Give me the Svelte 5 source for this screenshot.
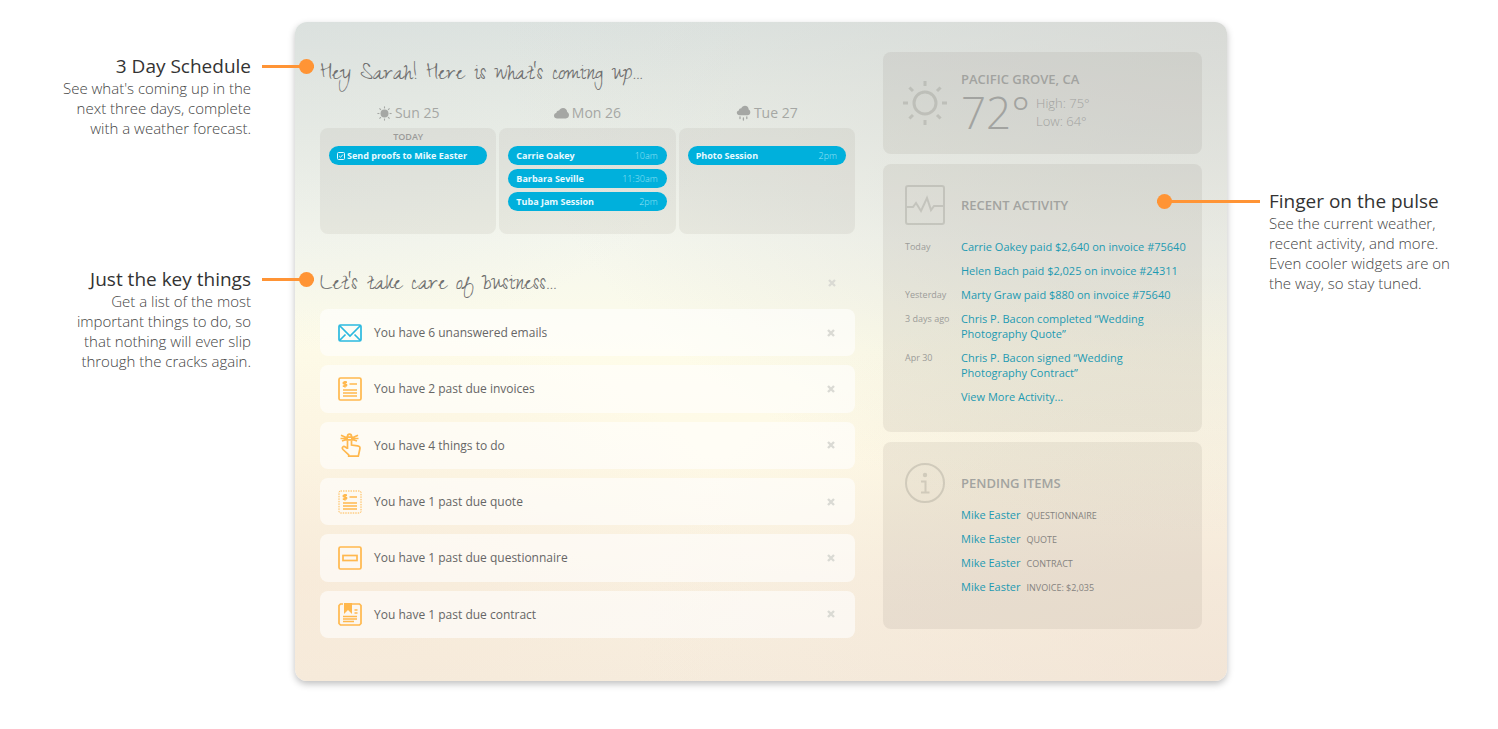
<script>
  const days = [
    {
      name: "Sun 25",
      weather: "sun",
      today: true,
      events: [{ title: "Send proofs to Mike Easter", task: true }]
    },
    {
      name: "Mon 26",
      weather: "cloud",
      events: [
        { title: "Carrie Oakey", time: "10am" },
        { title: "Barbara Seville", time: "11:30am" },
        { title: "Tuba Jam Session", time: "2pm" }
      ]
    },
    {
      name: "Tue 27",
      weather: "rain",
      events: [{ title: "Photo Session", time: "2pm" }]
    }
  ];

  let showList = true;
  let todos = [
    { icon: "mail", text: "You have 6 unanswered emails" },
    { icon: "invoice", text: "You have 2 past due invoices" },
    { icon: "hand", text: "You have 4 things to do" },
    { icon: "quote", text: "You have 1 past due quote" },
    { icon: "form", text: "You have 1 past due questionnaire" },
    { icon: "contract", text: "You have 1 past due contract" }
  ];

  const activity = [
    { when: "Today", text: "Carrie Oakey paid $2,640 on invoice #75640" },
    { when: "", text: "Helen Bach paid $2,025 on invoice #24311" },
    { when: "Yesterday", text: "Marty Graw paid $880 on invoice #75640" },
    { when: "3 days ago", text: "Chris P. Bacon completed “Wedding Photography Quote”" },
    { when: "Apr 30", text: "Chris P. Bacon signed “Wedding Photography Contract”" },
    { when: "", text: "View More Activity..." }
  ];

  const pending = [
    { who: "Mike Easter", what: "Questionnaire" },
    { who: "Mike Easter", what: "Quote" },
    { who: "Mike Easter", what: "Contract" },
    { who: "Mike Easter", what: "Invoice: $2,035" }
  ];

  const rays = [0, 45, 90, 135, 180, 225, 270, 315];

  const dismiss = todo => {
    todos = todos.filter(val => val !== todo);
  };
</script>

<div class="page">
  <div class="notes left">
    <section class="note">
      <h3>3 Day Schedule<span class="pin"></span></h3>
      <p>See what's coming up in the next three days, complete with a weather forecast.</p>
    </section>
    <section class="note">
      <h3>Just the key things<span class="pin"></span></h3>
      <p>Get a list of the most important things to do, so that nothing will ever slip through the cracks again.</p>
    </section>
  </div>

  <main class="board">
    <div class="primary">
      <h1 class="script">Hey Sarah! Here is what's coming up...</h1>

      <div class="days">
        {#each days as day}
          <section class="day">
            <h2>
              {#if day.weather === "sun"}
                <svg width="15" height="15" viewBox="0 0 15 15">
                  <circle cx="7.5" cy="7.5" r="4" fill="currentColor" />
                  {#each rays as r}
                    <path d="M7.5 0.4v2" transform="rotate({r} 7.5 7.5)" stroke="currentColor" stroke-width="1.1" />
                  {/each}
                </svg>
              {:else}
                <svg width="15" height="16" viewBox="0 0 15 16">
                  <path
                    transform={day.weather === "rain" ? "translate(.8 0) scale(.9)" : "translate(0 2)"}
                    d="M3.2 11.4C1.4 11.4 0 10.4 0 8.7c0-1.5 1-2.5 2.3-2.7C2.4 4.3 3.7 3.4 5.1 3.5 5.8 1.9 7.3.9 9 .9c2.5 0 4.2 1.9 4.2 4.2 1.1.6 1.8 1.6 1.8 3 0 2-1.3 3.3-3.2 3.3z"
                    fill="currentColor"
                  />
                  {#if day.weather === "rain"}
                    <path d="M4 11.8v1.8M10.8 11.8v1.8M7.4 13v2" stroke="currentColor" stroke-width="1.3" stroke-linecap="round" />
                  {/if}
                </svg>
              {/if}
              {day.name}
            </h2>
            <div class="slot">
              <div class="today">{day.today ? "TODAY" : ""}</div>
              {#each day.events as event}
                <a class="event" href="#event">
                  {#if event.task}
                    <svg width="8" height="8" viewBox="0 0 8 8" fill="none" stroke="currentColor">
                      <rect x=".5" y=".5" width="7" height="7" rx="1" />
                      <path d="M2.2 4l1.3 1.3 2.4-2.7" />
                    </svg>
                  {/if}
                  <b>{event.title}</b>
                  {#if event.time}<time>{event.time}</time>{/if}
                </a>
              {/each}
            </div>
          </section>
        {/each}
      </div>

      {#if showList}
        <div class="list-head">
          <h1 class="script">Let's take care of business...</h1>
          <button class="close" aria-label="Close list" on:click={() => (showList = false)}>
            <svg width="8" height="8" viewBox="0 0 8 8"><path d="M1 1l6 6M7 1l-6 6" /></svg>
          </button>
        </div>

        <ul class="todos">
          {#each todos as todo}
            <li>
              <svg class="icon" class:blue={todo.icon === "mail"} width="24" height="24" viewBox="0 0 24 24">
                {#if todo.icon === "mail"}
                  <rect x="1" y="4" width="22" height="16" rx="1.5" />
                  <path d="M1.5 4.5L12 15 22.5 4.5M1.5 19.5l6-6M22.5 19.5l-6-6" />
                {:else if todo.icon === "form"}
                  <rect x="1" y="1" width="22" height="22" rx="1.5" />
                  <rect x="5" y="9.5" width="14" height="5" />
                {:else if todo.icon === "hand"}
                  <path d="M9.5 16V7.5M13.5 7.5V12l6 .8c2 .3 2.7 1.3 2.4 3l-1.6 7.4h-9.6v-1.4L5 16.5c-1.7-1.9.4-3.9 2.3-2.5l2.2 1.5" />
                  <path d="M9.5 3.5c0-3.3 4-3.3 4 0M9.2 4.2h4.6v2.6H9.2zM9.2 5L3 2.2M9.2 5.5H2.5M9.2 6.2L4 8M13.8 5L20 2.2M13.8 5.5h6.7M13.8 6.2L19 8" />
                {:else if todo.icon === "contract"}
                  <path d="M5 2H2.5L1 3.5V21.5L2.5 23h19l1.5-1.5v-18L21.5 2H14" />
                  <path class="solid" d="M6 1h8v11l-4-4-4 4z" />
                  <path d="M16.5 8h3M16.5 11h3M5 14.5h14M5 17h14M5 19.5h11" />
                {:else}
                  <rect
                    x="1" y="1" width="22" height="22" rx="1.5"
                    class:dashed={todo.icon === "quote"}
                  />
                  <path d="M11.5 7H19M5 13h14M5 16h14M5 19h14" />
                  <path d="M9 5.2H6.8C4.7 5.2 4.7 7 6.8 7c2.5 0 2.5 2.2 0 2.2H4.8M7 4v6.5" />
                {/if}
              </svg>
              <a href="#todo">{todo.text}</a>
              <button class="close" aria-label="Dismiss" on:click={() => dismiss(todo)}>
                <svg width="8" height="8" viewBox="0 0 8 8"><path d="M1 1l6 6M7 1l-6 6" /></svg>
              </button>
            </li>
          {/each}
        </ul>
      {/if}
    </div>

    <aside>
      <section class="card weather">
        <svg class="badge" width="46" height="46" viewBox="0 0 46 46">
          <circle cx="23" cy="23" r="11" />
          {#each rays as r}
            <path d="M23 1v5" transform="rotate({r} 23 23)" />
          {/each}
        </svg>
        <div>
          <h2>PACIFIC GROVE, CA</h2>
          <div class="temps">
            <span class="now">72°</span>
            <span class="range">High: 75°<br />Low: 64°</span>
          </div>
        </div>
      </section>

      <section class="card recent">
        <header>
          <svg class="badge" width="40" height="40" viewBox="0 0 40 40">
            <rect x="1" y="1" width="38" height="38" rx="2" />
            <path d="M2 22h6l3-4 5 8 6-13 4 12 3-4h9" />
          </svg>
          <h2>RECENT ACTIVITY</h2>
        </header>
        <ul>
          {#each activity as item}
            <li>
              <span class="when">{item.when}</span>
              <a href="#activity">{item.text}</a>
            </li>
          {/each}
        </ul>
      </section>

      <section class="card pending">
        <header>
          <svg class="badge" width="40" height="40" viewBox="0 0 40 40">
            <circle cx="20" cy="20" r="19" />
            <circle class="solid" cx="20" cy="12" r="2.2" />
            <path d="M16 18.5h4.5V29M16 29.5h8.5" />
          </svg>
          <h2>PENDING ITEMS</h2>
        </header>
        <ul>
          {#each pending as item}
            <li>
              <a href="#pending">{item.who}</a>
              <span class="what">{item.what}</span>
            </li>
          {/each}
        </ul>
      </section>
    </aside>
  </main>

  <div class="notes right">
    <section class="note">
      <h3>Finger on the pulse<span class="pin"></span></h3>
      <p>See the current weather, recent activity, and more. Even cooler widgets are on the way, so stay tuned.</p>
    </section>
  </div>
</div>

<style>
  :global(body) {
    background: #fff;
    font-family: "Open Sans", "Noto Sans", sans-serif;
  }

  * {
    margin: 0;
    padding: 0;
    box-sizing: border-box;
  }

  a {
    text-decoration: none;
  }

  ul {
    list-style: none;
  }

  svg {
    flex: none;
  }

  .page {
    display: grid;
    grid-template-columns: minmax(0, 295fr) minmax(0, 932fr) minmax(0, 271fr);
    align-items: start;
    padding: 22px 0 48px;
  }

  /* notes beside the board */
  .notes {
    position: relative;
    z-index: 1;
    display: grid;
    color: #444;
  }

  .left {
    justify-items: end;
    gap: 129px;
    padding: 32px 44px 0 0;
    text-align: right;
  }

  .right {
    padding: 167px 0 0 42px;
  }

  .note {
    max-width: 190px;
  }

  .note h3 {
    position: relative;
    font-size: 19px;
    font-weight: 400;
    line-height: 24px;
    color: #333;
    white-space: nowrap;
  }

  .note p {
    font-size: 15px;
    font-weight: 300;
    line-height: 20px;
  }

  .pin {
    position: absolute;
    top: 11px;
    left: calc(100% + 11px);
    width: 52px;
    height: 3px;
    background: #ff9435;
  }

  .pin::after {
    content: "";
    position: absolute;
    top: -6px;
    right: 0;
    width: 15px;
    height: 15px;
    border-radius: 50%;
    background: #ff9435;
  }

  .right .pin {
    left: auto;
    right: calc(100% + 9px);
    width: 103px;
  }

  .right .pin::after {
    right: auto;
    left: 0;
  }

  .board {
    display: grid;
    grid-template-columns: minmax(0, 535fr) minmax(0, 319fr);
    gap: 28px;
    padding: 30px 25px 43px;
    border-radius: 12px;
    box-shadow: 0 3px 7px rgba(0, 0, 0, 0.25);
    background:
      radial-gradient(ellipse at 100% 0, rgba(214, 214, 210, 0.7), rgba(214, 214, 210, 0) 55%),
      radial-gradient(ellipse at 100% 100%, rgba(238, 222, 208, 0.5), rgba(238, 222, 208, 0) 45%),
      radial-gradient(ellipse at 0 0, rgba(216, 220, 218, 0.4), rgba(216, 220, 218, 0) 35%),
      radial-gradient(ellipse at 0 85%, rgba(246, 230, 212, 0.5), rgba(246, 230, 212, 0) 35%),
      linear-gradient(#dde4e1, #e6ebe5 10%, #f5f7ee 33%, #fefce9 50%, #fef9e6 66%, #f9f0e0 84%, #f6ecdd);
  }

  .script {
    padding-top: 6px;
    font-family: "Zeyada", "Reenie Beanie", "Liberation Serif", cursive;
    font-size: 25px;
    font-weight: 400;
    line-height: 36px;
    color: #707070;
    white-space: nowrap;
  }

  /* three day schedule */
  .days {
    display: grid;
    grid-template-columns: repeat(3, 1fr);
    gap: 3px;
    margin-top: 8px;
  }

  .day h2 {
    display: flex;
    align-items: center;
    justify-content: center;
    gap: 3px;
    font-size: 14px;
    font-weight: 400;
    line-height: 22px;
    color: #a5a7a4;
  }

  .slot {
    display: flex;
    flex-direction: column;
    gap: 4px;
    min-height: 106px;
    margin-top: 4px;
    padding: 4px 9px 20px;
    border-radius: 8px;
    background: rgba(120, 115, 105, 0.09);
  }

  .today {
    height: 10px;
    font-size: 9px;
    font-weight: 600;
    line-height: 10px;
    text-align: center;
    color: #9b9b99;
  }

  .event {
    display: flex;
    align-items: center;
    gap: 2px;
    height: 19px;
    padding: 0 9px 0 8px;
    border-radius: 10px;
    background: #00b0dc;
    font-size: 9px;
    color: #e9faff;
  }

  .event time {
    margin-left: auto;
    font-weight: 300;
    color: #9be3f5;
  }

  /* things to take care of */
  .list-head {
    display: flex;
    align-items: center;
    justify-content: space-between;
    margin-top: 28px;
    padding-right: 19px;
  }

  .close {
    display: grid;
    border: 0;
    background: none;
    cursor: pointer;
  }

  .close path {
    fill: none;
    stroke: #dadad4;
    stroke-width: 2.4;
  }

  .todos {
    display: grid;
    grid-auto-rows: 1fr;
    gap: 9px;
    min-height: 329px;
    margin-top: 5px;
  }

  .todos li {
    display: flex;
    align-items: center;
    gap: 12px;
    padding: 0 20px 0 18px;
    border-radius: 8px;
    background: rgba(255, 255, 255, 0.6);
  }

  .todos a {
    flex: 1;
    font-size: 12px;
    color: #666;
  }

  .icon {
    fill: none;
    stroke: #ffb84d;
    stroke-width: 1.7;
  }

  .icon.blue {
    stroke: #2bb9df;
  }

  .icon .solid {
    fill: #ffb84d;
    stroke: none;
  }

  .dashed {
    stroke-width: 1;
    stroke-dasharray: 1.5 1;
  }

  /* sidebar */
  aside {
    display: flex;
    flex-direction: column;
    gap: 10px;
  }

  .card {
    padding: 21px 20px 0 22px;
    border-radius: 8px;
    background: rgba(100, 90, 75, 0.09);
  }

  .card h2 {
    font-size: 13px;
    font-weight: 600;
    line-height: 18px;
    color: #a2a3a0;
  }

  .card header {
    display: flex;
    align-items: center;
    gap: 16px;
  }

  .card a {
    font-size: 11px;
    line-height: 15px;
    color: #1d9ab2;
  }

  .badge {
    fill: none;
    stroke: rgba(110, 110, 100, 0.22);
    stroke-width: 2;
  }

  .weather .badge {
    stroke-width: 3;
  }

  .badge .solid {
    fill: rgba(110, 110, 100, 0.22);
    stroke: none;
  }

  .weather {
    display: flex;
    align-items: center;
    gap: 13px;
    min-height: 102px;
    padding: 0 20px 0 19px;
  }

  .temps {
    display: flex;
    align-items: center;
    gap: 6px;
    color: #a2a3a0;
  }

  .now {
    font-size: 44px;
    font-weight: 300;
    line-height: 48px;
  }

  .range {
    font-size: 13px;
    font-weight: 300;
    line-height: 18px;
  }

  .recent {
    min-height: 268px;
  }

  .recent ul {
    display: grid;
    gap: 9px;
    margin-top: 14px;
  }

  .recent li {
    display: grid;
    grid-template-columns: 56px 1fr;
    margin-right: -8px;
  }

  .when {
    font-size: 9px;
    line-height: 15px;
    color: #9c9c99;
  }

  .pending {
    min-height: 187px;
  }

  .pending ul {
    display: grid;
    gap: 9px;
    margin: 4px 0 0 56px;
  }

  .pending li {
    display: flex;
    align-items: baseline;
    gap: 6px;
    height: 15px;
    font-size: 11px;
    line-height: 15px;
  }

  .what {
    font-size: 9px;
    text-transform: uppercase;
    color: #858380;
  }
</style>
